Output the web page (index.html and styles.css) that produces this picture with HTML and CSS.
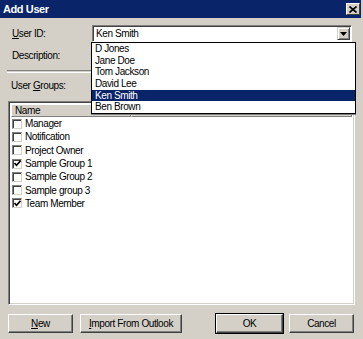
FILE: index.html
```html
<!DOCTYPE html>
<html lang="en">
<head>
    <meta charset="UTF-8">
    <meta name="viewport" content="width=device-width, initial-scale=1.0">
    <title>Add User</title>
    <link rel="stylesheet" href="styles.css">
</head>
<body>
    <div class="window">
        <div class="titlebar">
            <span class="title">Add User</span>
            <span class="close">
                <svg width="8" height="7" viewBox="0 0 8 7"><path d="M0.5 0.5 L7.5 6.5 M7.5 0.5 L0.5 6.5" stroke="#000" stroke-width="1.6"/></svg>
            </span>
        </div>
        <div class="content">
            <div class="form-row">
                <label class="field-label"><u>U</u>ser ID:</label>
                <div class="combo">
                    <div class="combo-box">
                        <span class="combo-text">Ken Smith</span>
                        <span class="combo-btn">
                            <svg width="7" height="4" viewBox="0 0 7 4"><path d="M0 0 H7 L3.5 4 Z" fill="#000"/></svg>
                        </span>
                    </div>
                    <ul class="popup">
                        <li>D Jones</li>
                        <li>Jane Doe</li>
                        <li>Tom Jackson</li>
                        <li>David Lee</li>
                        <li class="selected">Ken Smith</li>
                        <li>Ben Brown</li>
                    </ul>
                </div>
            </div>
            <div class="form-row">
                <label class="field-label">Description:</label>
                <div class="text-input"></div>
            </div>
            <div class="separator"></div>
            <div class="group-label">User <u>G</u>roups:</div>
            <div class="listbox">
                <div class="list-header">
                    <span class="header-cell">Name</span>
                    <span class="header-rest"></span>
                </div>
                <div class="list-items">
                    <div class="item"><span class="check"></span>Manager</div>
                    <div class="item"><span class="check"></span>Notification</div>
                    <div class="item"><span class="check"></span>Project Owner</div>
                    <div class="item"><span class="check checked"><svg width="7" height="7" viewBox="0 0 7 7"><path d="M0.5 3 L2.5 5.2 L6.5 0.8" stroke="#000" stroke-width="1.6" fill="none"/></svg></span>Sample Group 1</div>
                    <div class="item"><span class="check"></span>Sample Group 2</div>
                    <div class="item"><span class="check"></span>Sample group 3</div>
                    <div class="item"><span class="check checked"><svg width="7" height="7" viewBox="0 0 7 7"><path d="M0.5 3 L2.5 5.2 L6.5 0.8" stroke="#000" stroke-width="1.6" fill="none"/></svg></span>Team Member</div>
                </div>
            </div>
            <div class="buttons">
                <button class="btn"><u>N</u>ew</button>
                <button class="btn wide"><u>I</u>mport From Outlook</button>
                <span class="spacer"></span>
                <button class="btn default">OK</button>
                <button class="btn">Cancel</button>
            </div>
        </div>
    </div>
</body>
</html>
```

FILE: styles.css
```css
body {
    margin: 0;
    background-color: #fff;
    font-family: 'Liberation Sans', Arial, sans-serif;
    font-size: 10px;
    letter-spacing: -0.4px;
    color: #000;
}
.window {
    width: 363px;
    height: 339px;
    background-color: #d4d0c8;
    box-sizing: border-box;
    padding-right: 2px;
    display: flex;
    flex-direction: column;
}
.titlebar {
    height: 18px;
    background-color: #0a246a;
    display: flex;
    align-items: center;
    justify-content: space-between;
    padding: 0 1px 0 3px;
}
.title {
    color: #fff;
    font-weight: bold;
    font-size: 11px;
}
.close {
    width: 14px;
    height: 12px;
    box-sizing: border-box;
    background-color: #d4d0c8;
    border: 1px solid;
    border-color: #fff #404040 #404040 #fff;
    display: flex;
    align-items: center;
    justify-content: center;
}
.content {
    flex: 1;
    padding: 7px 6px 0 8px;
    display: flex;
    flex-direction: column;
}
.form-row {
    display: grid;
    grid-template-columns: 84px 260px;
    align-items: center;
    height: 17px;
}
.form-row + .form-row {
    margin-top: 5px;
}
.field-label {
    padding-left: 4px;
}
.combo {
    position: relative;
    height: 17px;
}
.combo-box, .text-input {
    height: 17px;
    box-sizing: border-box;
    background-color: #fff;
    border: 1px solid;
    border-color: #808080 #fff #fff #808080;
    box-shadow: inset 1px 1px 0 #404040;
}
.combo-box {
    display: flex;
    align-items: center;
    justify-content: space-between;
    padding: 0 1px 0 3px;
}
.combo-btn {
    width: 13px;
    height: 13px;
    box-sizing: border-box;
    background-color: #d4d0c8;
    border: 1px solid;
    border-color: #d4d0c8 #404040 #404040 #d4d0c8;
    box-shadow: inset 1px 1px 0 #fff, inset -1px -1px 0 #808080;
    display: flex;
    align-items: center;
    justify-content: center;
}
.popup {
    position: absolute;
    top: 17px;
    left: -1px;
    right: -4px;
    margin: 0;
    padding: 0;
    list-style: none;
    background-color: #fff;
    border: 1px solid #000;
    box-shadow: 0 1px 0 #808080;
}
.popup li {
    height: 11.7px;
    line-height: 11.7px;
    padding-left: 3px;
}
.popup .selected {
    background-color: #0a246a;
    color: #fff;
}
.separator {
    margin-top: 6px;
    height: 1px;
    border-top: 1px solid #808080;
    border-bottom: 1px solid #fff;
    margin-left: -1px;
}
.group-label {
    margin-top: 7px;
    padding-left: 3px;
    line-height: 12px;
}
.listbox {
    margin-top: 9px;
    height: 204px;
    box-sizing: border-box;
    background-color: #fff;
    border: 1px solid;
    border-color: #808080 #fff #fff #808080;
    box-shadow: inset 1px 1px 0 #404040, inset -1px -1px 0 #d4d0c8;
    padding: 2px;
}
.list-header {
    display: flex;
    height: 13px;
}
.header-cell, .header-rest {
    box-sizing: border-box;
    background-color: #d4d0c8;
    border: 1px solid;
    border-color: #fff #808080 #808080 #fff;
    line-height: 11px;
}
.header-cell {
    width: 120px;
    padding-left: 3px;
}
.header-rest {
    flex: 1;
}
.item {
    height: 13.3px;
    display: flex;
    align-items: center;
}
.check {
    width: 10px;
    height: 10px;
    box-sizing: border-box;
    margin: 0 3px 0 1px;
    background-color: #fff;
    border: 1px solid;
    border-color: #808080 #d4d0c8 #d4d0c8 #808080;
    box-shadow: inset 1px 1px 0 #404040;
    display: flex;
    align-items: center;
    justify-content: center;
}
.buttons {
    margin-top: 9px;
    display: flex;
    gap: 7px;
    padding-right: 1px;
}
.spacer {
    flex: 1;
}
.btn {
    width: 65px;
    height: 19px;
    padding: 0;
    font-family: inherit;
    font-size: 10px;
    letter-spacing: -0.4px;
    color: #000;
    background-color: #d4d0c8;
    border: 1px solid;
    border-color: #fff #404040 #404040 #fff;
    box-shadow: inset -1px -1px 0 #808080;
}
.btn.wide {
    width: 102px;
}
.btn.default {
    width: 67px;
    outline: 1px solid #000;
    margin-right: -1px;
}
```
